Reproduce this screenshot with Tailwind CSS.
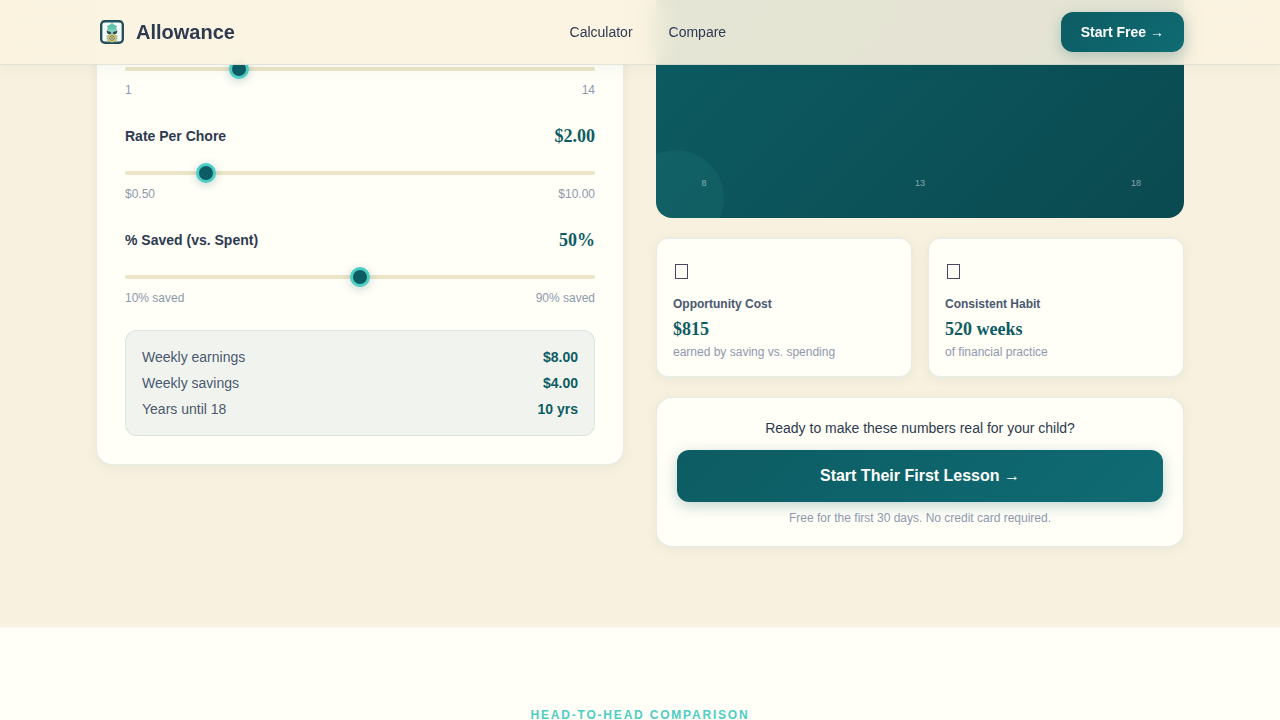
<!DOCTYPE html>
<html lang="en">
<head>
  <meta charset="UTF-8">
  <meta name="viewport" content="width=device-width, initial-scale=1.0">
  <title>Allowance</title>
  <script src="https://cdn.jsdelivr.net/npm/@tailwindcss/browser@4"></script>
</head>
<body class="bg-[#f9f1df] font-['Liberation_Sans',Arial,sans-serif] text-[#2d3a50]">

  <!-- Header -->
  <header class="sticky top-0 z-10 border-b border-[#0d5c63]/10 bg-[#fbf3e0]/91 shadow-[0_2px_16px_rgba(13,92,99,0.06)] backdrop-blur-md">
    <div class="mx-auto flex h-16 max-w-6xl items-center justify-between px-8">
      <a href="#" class="flex items-center gap-2 text-xl font-bold">
        <svg class="size-8" viewBox="0 0 32 32" fill="none" aria-hidden="true">
          <rect x="5.200" y="5.200" width="21.600" height="21.600" rx="3.500" fill="#f5fbf6" stroke="#24505c" stroke-width="2.400"/>
          <path d="M16 6.800l2.200 2 2.800 1.200-.8 2 1 2.500H10.800l1-2.500-.8-2 2.800-1.200z" fill="#62c3ae"/>
          <path d="M13 13.500h6v5h-6z" fill="#8bd3bd"/>
          <path d="M10.500 14.500l4.500 1.500v2.500l-3.500-.8zM21.500 14.500l-4.500 1.500v2.500l3.500-.8z" fill="#24505c"/>
          <path d="M10.500 19h11v6.500h-11z" fill="#c5e3d4"/>
          <circle cx="16" cy="22" r="4.300" fill="#ead990" stroke="#8d8950" stroke-width=".7"/>
          <circle cx="16" cy="22" r="2.300" fill="#f3e8ae" stroke="#59642f"/>
          <circle cx="16" cy="22" r=".8" fill="#24505c"/>
        </svg>
        Allowance
      </a>
      <nav class="flex gap-9 text-sm">
        <a href="#calculator">Calculator</a>
        <a href="#compare">Compare</a>
      </nav>
      <button class="h-10 rounded-xl bg-linear-135 from-[#0d5c63] to-[#0f6b73] px-5 text-sm font-bold text-white shadow-[0_4px_14px_rgba(13,92,99,0.25)]">Start Free →</button>
    </div>
  </header>

  <!-- Calculator -->
  <section id="calculator" class="-mt-[76px] pb-20">
    <div class="mx-auto grid max-w-6xl grid-cols-2 items-start gap-8 px-8">

      <!-- Inputs -->
      <div class="rounded-2xl border border-[#0d5c63]/10 bg-[#fffef7] p-7 shadow-[0_2px_12px_rgba(13,92,99,0.08)]">
        <div class="mb-6 pt-10">
          <input aria-label="Chores per week" type="range" min="1" max="14" value="4" class="flex h-[22px] w-full appearance-none items-center bg-transparent [&::-webkit-slider-runnable-track]:h-1 [&::-webkit-slider-runnable-track]:rounded-sm [&::-webkit-slider-runnable-track]:bg-[#ebe4c6] [&::-webkit-slider-thumb]:-mt-2 [&::-webkit-slider-thumb]:size-5 [&::-webkit-slider-thumb]:appearance-none [&::-webkit-slider-thumb]:rounded-full [&::-webkit-slider-thumb]:border-3 [&::-webkit-slider-thumb]:border-[#4ecdc4] [&::-webkit-slider-thumb]:bg-[#0d5c63] [&::-webkit-slider-thumb]:shadow-[0_2px_8px_rgba(13,92,99,0.25)]">
          <div class="mt-0.5 flex justify-between text-xs text-[#8d99ae]"><span>1</span><span>14</span></div>
        </div>

        <div class="mb-6">
          <div class="mb-3 flex h-7 items-center justify-between">
            <label for="rate" class="text-sm font-bold">Rate Per Chore</label>
            <span class="font-['Liberation_Serif',serif] text-lg font-bold text-[#0d5c63]">$2.00</span>
          </div>
          <input id="rate" type="range" min="0.5" max="10" step="0.25" value="2" class="flex h-[22px] w-full appearance-none items-center bg-transparent [&::-webkit-slider-runnable-track]:h-1 [&::-webkit-slider-runnable-track]:rounded-sm [&::-webkit-slider-runnable-track]:bg-[#ebe4c6] [&::-webkit-slider-thumb]:-mt-2 [&::-webkit-slider-thumb]:size-5 [&::-webkit-slider-thumb]:appearance-none [&::-webkit-slider-thumb]:rounded-full [&::-webkit-slider-thumb]:border-3 [&::-webkit-slider-thumb]:border-[#4ecdc4] [&::-webkit-slider-thumb]:bg-[#0d5c63] [&::-webkit-slider-thumb]:shadow-[0_2px_8px_rgba(13,92,99,0.25)]">
          <div class="mt-0.5 flex justify-between text-xs text-[#8d99ae]"><span>$0.50</span><span>$10.00</span></div>
        </div>

        <div class="mb-6">
          <div class="mb-3 flex h-7 items-center justify-between">
            <label for="saved" class="text-sm font-bold">% Saved (vs. Spent)</label>
            <span class="font-['Liberation_Serif',serif] text-lg font-bold text-[#0d5c63]">50%</span>
          </div>
          <input id="saved" type="range" min="10" max="90" step="5" value="50" class="flex h-[22px] w-full appearance-none items-center bg-transparent [&::-webkit-slider-runnable-track]:h-1 [&::-webkit-slider-runnable-track]:rounded-sm [&::-webkit-slider-runnable-track]:bg-[#ebe4c6] [&::-webkit-slider-thumb]:-mt-2 [&::-webkit-slider-thumb]:size-5 [&::-webkit-slider-thumb]:appearance-none [&::-webkit-slider-thumb]:rounded-full [&::-webkit-slider-thumb]:border-3 [&::-webkit-slider-thumb]:border-[#4ecdc4] [&::-webkit-slider-thumb]:bg-[#0d5c63] [&::-webkit-slider-thumb]:shadow-[0_2px_8px_rgba(13,92,99,0.25)]">
          <div class="mt-0.5 flex justify-between text-xs text-[#8d99ae]"><span>10% saved</span><span>90% saved</span></div>
        </div>

        <dl class="flex flex-col gap-1.5 rounded-xl border border-[#0d5c63]/10 bg-[#0d5c63]/6 p-4 text-sm">
          <div class="flex justify-between"><dt class="text-[#4a5870]">Weekly earnings</dt><dd class="font-bold text-[#0d5c63]">$8.00</dd></div>
          <div class="flex justify-between"><dt class="text-[#4a5870]">Weekly savings</dt><dd class="font-bold text-[#0d5c63]">$4.00</dd></div>
          <div class="flex justify-between"><dt class="text-[#4a5870]">Years until 18</dt><dd class="font-bold text-[#0d5c63]">10 yrs</dd></div>
        </dl>
      </div>

      <!-- Results -->
      <div class="flex flex-col gap-5">
        <div class="relative flex min-h-[229px] flex-col justify-end overflow-hidden rounded-2xl bg-linear-135 from-[#0d5c63] to-[#0a4a50] px-10 pb-7">
          <div class="absolute -bottom-7 -left-7 size-24 rounded-full bg-[#4ecdc4]/8"></div>
          <div class="relative flex justify-between text-center text-[9px] leading-[14px] text-white/50">
            <span class="w-4">8</span><span class="w-4">13</span><span class="w-4">18</span>
          </div>
        </div>

        <div class="grid grid-cols-2 gap-4">
          <div class="rounded-xl border border-[#0d5c63]/10 bg-[#fffef7] p-4 shadow-[0_2px_12px_rgba(13,92,99,0.08)]">
            <div class="mb-2 flex h-8 items-center">
              <svg class="h-5 w-4" viewBox="0 0 16 20" fill="none" stroke="#4a4560" aria-hidden="true"><rect x="2.500" y="3.500" width="12" height="14"/></svg>
            </div>
            <h3 class="text-xs leading-[18px] font-bold text-[#4a5870]">Opportunity Cost</h3>
            <p class="mt-1 font-['Liberation_Serif',serif] text-lg leading-6 font-bold text-[#0d5c63]">$815</p>
            <p class="mt-[3px] text-xs text-[#8d99ae]">earned by saving vs. spending</p>
          </div>
          <div class="rounded-xl border border-[#0d5c63]/10 bg-[#fffef7] p-4 shadow-[0_2px_12px_rgba(13,92,99,0.08)]">
            <div class="mb-2 flex h-8 items-center">
              <svg class="h-5 w-4" viewBox="0 0 16 20" fill="none" stroke="#4a4560" aria-hidden="true"><rect x="2.500" y="3.500" width="12" height="14"/></svg>
            </div>
            <h3 class="text-xs leading-[18px] font-bold text-[#4a5870]">Consistent Habit</h3>
            <p class="mt-1 font-['Liberation_Serif',serif] text-lg leading-6 font-bold text-[#0d5c63]">520 weeks</p>
            <p class="mt-[3px] text-xs text-[#8d99ae]">of financial practice</p>
          </div>
        </div>

        <div class="rounded-2xl border border-[#0d5c63]/10 bg-[#fffef7] p-5 text-center shadow-[0_2px_12px_rgba(13,92,99,0.08)]">
          <p class="mb-3 text-sm">Ready to make these numbers real for your child?</p>
          <button class="block h-13 w-full rounded-xl bg-linear-135 from-[#0d5c63] to-[#0f6b73] font-bold text-white shadow-[0_4px_14px_rgba(13,92,99,0.25)]">Start Their First Lesson →</button>
          <p class="mt-2 text-xs text-[#8d99ae]">Free for the first 30 days. No credit card required.</p>
        </div>
      </div>
    </div>
  </section>

  <!-- Comparison -->
  <section id="compare" class="bg-[#fffef7] pt-20 text-center">
    <p class="text-xs font-bold tracking-[0.15em] text-[#4ecdc4] uppercase">Head-to-Head Comparison</p>
  </section>
</body>
</html>
